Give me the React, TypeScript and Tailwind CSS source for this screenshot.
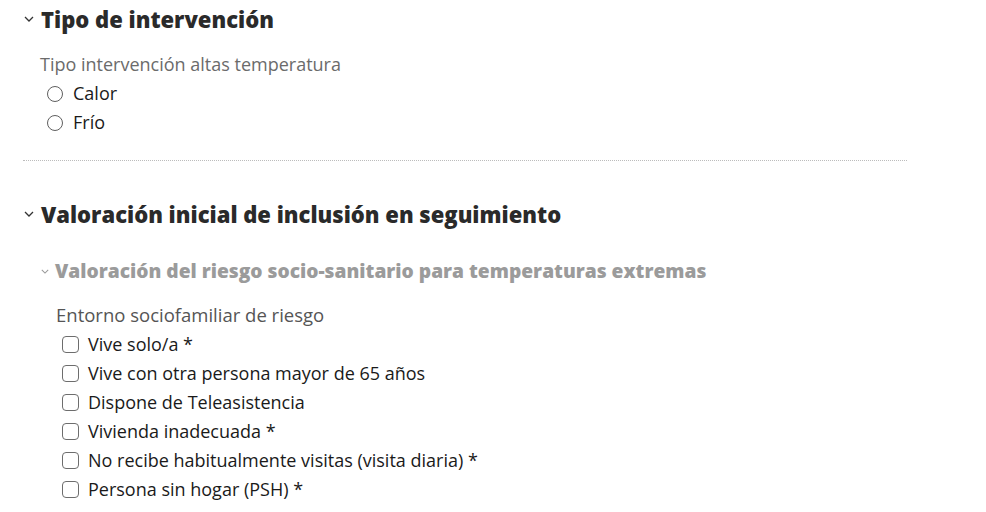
const Chevron = ({ className }: { className?: string }) => (
  <svg viewBox="0 0 10 6" className={className} fill="none" stroke="currentColor" strokeWidth="1.3">
    <path d="M1 1l4 4 4-4" />
  </svg>
);

const riskItems = [
  'Vive solo/a *',
  'Vive con otra persona mayor de 65 años',
  'Dispone de Teleasistencia',
  'Vivienda inadecuada *',
  'No recibe habitualmente visitas (visita diaria) *',
  'Persona sin hogar (PSH) *',
];

export default function App() {
  return (
    <div className="min-h-screen bg-white font-['Open_Sans',sans-serif] text-[#222]">
      <div className="w-[884px] pl-[23px] box-content">
        <section className="pt-[4px]">
          <h2 className="flex items-center h-[30px]">
            <Chevron className="w-[10px] h-[6px] ml-[1px] mr-[7px] text-[#333]" />
            <span className="text-[22px] font-extrabold text-[#2a2a2a]">Tipo de intervención</span>
          </h2>
          <div className="pl-[17px] pt-[18px] pb-[23px]">
            <p className="text-[18px] leading-[24px] text-[#6b6b6b]">Tipo intervención altas temperatura</p>
            <div className="flex flex-col pl-[7px] pt-[3px]">
              {['Calor', 'Frío'].map((o) => (
                <label key={o} className="flex items-center h-[29px] gap-[10px] text-[18px] text-[#1a1a1a]">
                  <span className="w-[16px] h-[16px] rounded-full border border-[#5f5f5f]" />
                  {o}
                </label>
              ))}
            </div>
          </div>
        </section>
        <hr className="border-0 border-t border-dotted border-[#bcbcbc]" />
        <section className="pt-[38px]">
          <h2 className="flex items-center h-[30px]">
            <Chevron className="w-[10px] h-[6px] ml-[1px] mr-[7px] text-[#333]" />
            <span className="text-[22px] font-extrabold text-[#2a2a2a]">Valoración inicial de inclusión en seguimiento</span>
          </h2>
          <div className="pl-[17px] pt-[29px]">
            <h3 className="flex items-center h-[26px]">
              <Chevron className="w-[8px] h-[5px] ml-[1px] mr-[6px] text-[#999]" />
              <span className="text-[19.2px] font-extrabold text-[#9b9b9b]">Valoración del riesgo socio-sanitario para temperaturas extremas</span>
            </h3>
            <div className="pl-[16px] pt-[19px]">
              <p className="text-[18.5px] leading-[24px] font-medium text-[#555]">Entorno sociofamiliar de riesgo</p>
              <div className="flex flex-col pl-[6px] pt-[3px]">
                {riskItems.map((o) => (
                  <label key={o} className="flex items-center h-[29px] gap-[9px] text-[18px] text-[#1a1a1a]">
                    <span className="w-[17px] h-[17px] rounded-[4px] border border-[#6d6d6d]" />
                    {o}
                  </label>
                ))}
              </div>
            </div>
          </div>
        </section>
      </div>
    </div>
  );
}
